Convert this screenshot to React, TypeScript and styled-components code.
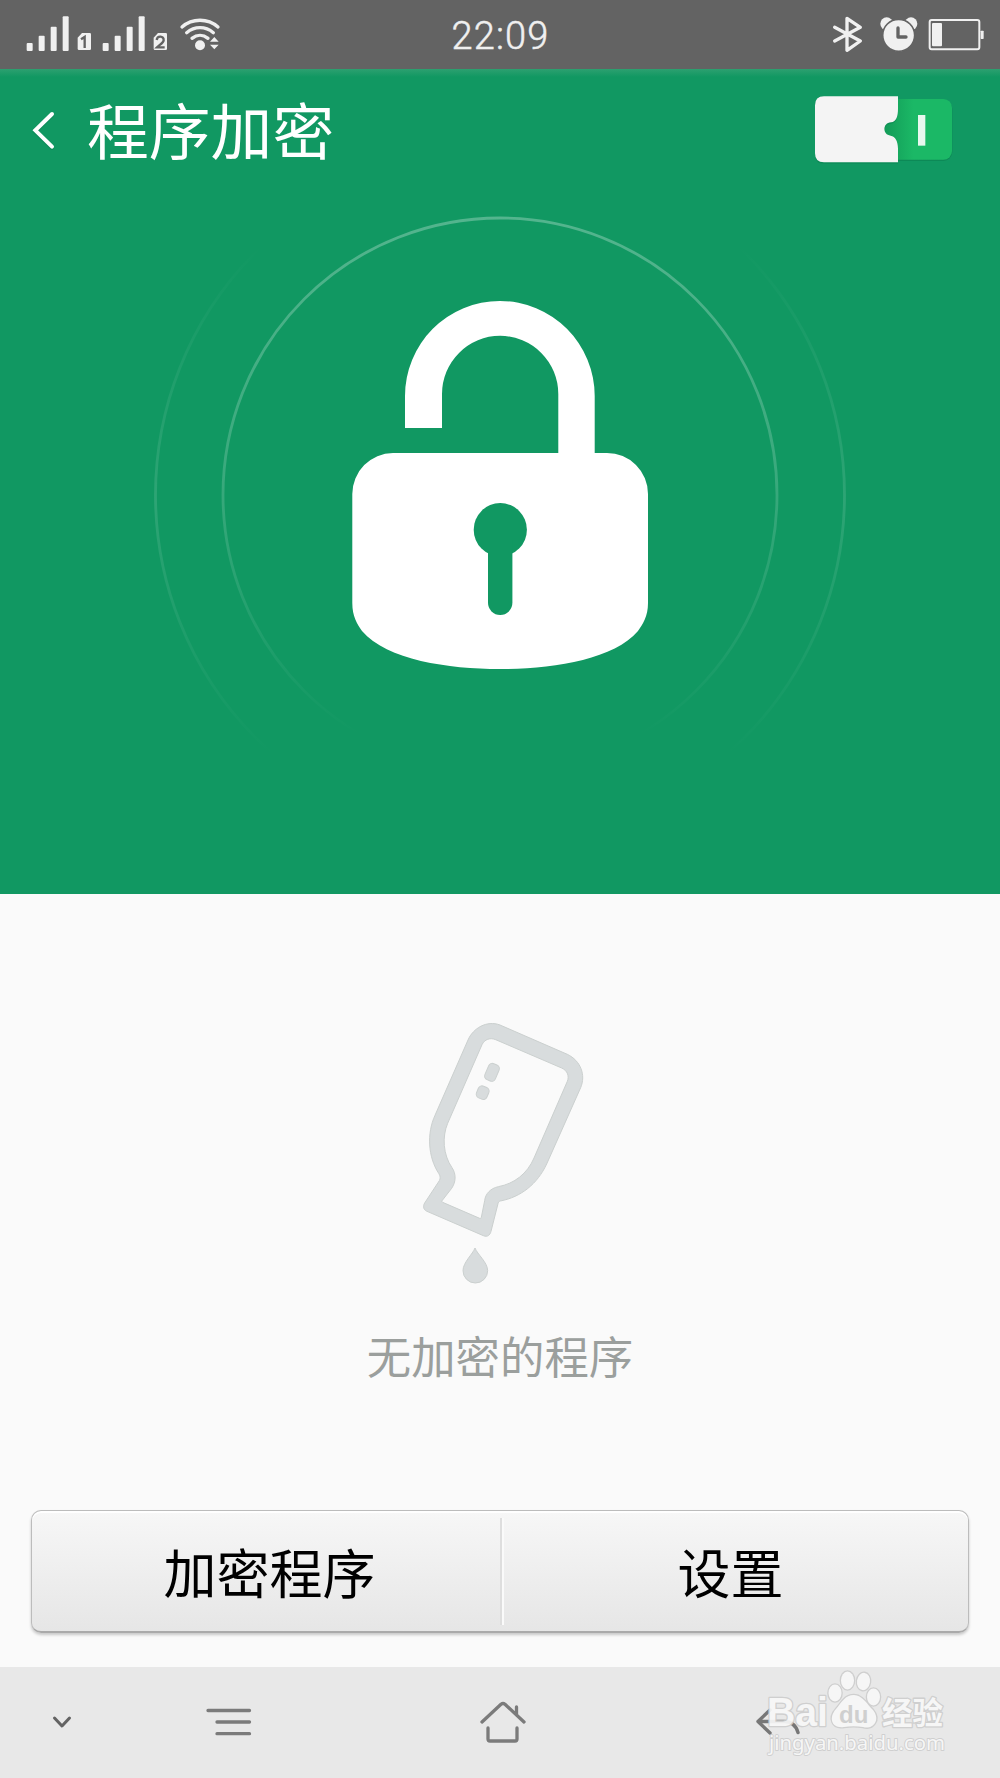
import React from "react";
import styled, { createGlobalStyle } from "styled-components";

const GlobalStyle = createGlobalStyle`
  * { box-sizing: border-box; }
  body { margin: 0; background: #fafafa; }
  svg { display: block; flex: none; }
`;

const cjk = `"Noto Sans CJK SC", "Noto Sans", sans-serif`;

const Screen = styled.div`
  width: 1000px;
  height: 1778px;
  display: flex;
  flex-direction: column;
  overflow: hidden;
  background: #fafafa;
  font-family: ${cjk};
`;

const StatusBar = styled.header`
  height: 69px;
  flex: none;
  display: grid;
  grid-template-columns: 1fr auto 1fr;
  background: #636363;
`;

const StatusGroup = styled.div<{ $end?: boolean }>`
  display: flex;
  justify-content: ${(p) => (p.$end ? "flex-end" : "flex-start")};
`;

const Clock = styled.time`
  font: 300 38px/73px Roboto, sans-serif;
  letter-spacing: 1.1px;
  margin-right: -1px;
  color: #f0f0f0;
  -webkit-text-stroke: 0.5px #f0f0f0;
`;

const Hero = styled.section`
  height: 825px;
  flex: none;
  display: flex;
  flex-direction: column;
  background: linear-gradient(#2da070 0, #119862 8px);
`;

const TitleBar = styled.div`
  height: 121px;
  flex: none;
  display: flex;
  align-items: center;
  padding: 0 48px 0 32px;
`;

const BackButton = styled.button`
  width: 55px;
  padding: 3px 0 0;
  border: 0;
  background: none;
`;

const Title = styled.h1`
  flex: 1;
  margin: 0;
  padding-bottom: 3px;
  font-size: 61.8px;
  font-weight: 400;
  line-height: 116px;
  color: #fff;
`;

const Switch = styled.button`
  width: 137px;
  height: 68px;
  padding: 0;
  border: 0;
  background: none;
`;

const LockArea = styled.div`
  display: flex;
  justify-content: center;
`;

const Empty = styled.main`
  flex: 1;
  display: flex;
  flex-direction: column;
  align-items: center;
  padding-top: 106px;
`;

const EmptyText = styled.p`
  margin: 21px 0 0;
  font-size: 44.4px;
  line-height: 68px;
  color: #9b9f9d;
`;

const Actions = styled.div`
  flex: none;
  height: 123px;
  margin: 0 31px 34px;
  display: flex;
  align-items: center;
  border: 1px solid #bcbcbc;
  border-bottom: 2px solid #aaa;
  border-radius: 10px;
  background: linear-gradient(#f7f7f7, #e6e6e6);
  box-shadow: inset 0 2px 0 #fff, 0 2px 3px rgba(0, 0, 0, 0.2);
`;

const ActionButton = styled.button<{ $width: number; $shift: number }>`
  width: ${(p) => p.$width}px;
  flex: none;
  padding: 0;
  padding-left: ${(p) => Math.max(p.$shift, 0)}px;
  padding-right: ${(p) => Math.max(-p.$shift, 0)}px;
  border: 0;
  background: none;
  font-family: ${cjk};
  font-size: 53px;
  line-height: 100px;
  color: #000;
`;

const Divider = styled.div`
  width: 4px;
  height: 107px;
  background: linear-gradient(90deg, #dedede 0 2px, #fafafa 2px);
`;

const NavBar = styled.nav`
  position: relative;
  height: 111px;
  flex: none;
  display: grid;
  grid-template-columns: 123px 211px 338px 212px;
  background: #e8e8e8;
`;

const NavButton = styled.button`
  display: flex;
  align-items: center;
  justify-content: center;
  padding: 0 0 1px;
  border: 0;
  background: none;
`;

const Watermark = styled.div`
  position: absolute;
  left: 760px;
  top: 0;
`;

const StatusLeftIcons = () => (
  <svg width="230" height="69" viewBox="0 0 690 207" fill="#f0f0f0">
    {[0, 228].map((x) => (
      <g key={x} transform={`translate(${x} 0)`}>
        <rect x="80" y="129" width="18" height="24" rx="3" />
        <rect x="116" y="107" width="18" height="46" rx="3" />
        <rect x="152" y="80" width="18" height="73" rx="3" />
        <rect x="188" y="49" width="18" height="104" rx="3" />
        <path d="M246 99h23q4 0 4 4v43q0 4-4 4h-32q-4 0-4-4v-33z" />
      </g>
    ))}
    <g fill="none" stroke="#636363" strokeWidth="7">
      <path d="M243 118l11-7v33" />
      <path d="M470 120c2-14 22-13 21 1-1 8-12 13-20 21h23" />
    </g>
    <g fill="none" stroke="#f0f0f0" strokeWidth="10" strokeLinecap="round">
      <path d="M546 81c31-27 77-27 108 0" />
      <path d="M560 98c24-20 56-20 80 0" />
      <path d="M576 115c15-12 33-12 48 0" />
    </g>
    <circle cx="600" cy="136" r="15" />
    <path d="M630 125l13-14 13 14zM630 134h26l-13 14z" />
  </svg>
);

const StatusRightIcons = () => (
  <svg width="220" height="69" viewBox="0 0 660 207" fill="#f0f0f0">
    <path
      d="M164 82l77 41-40 28V55l40 27-77 41"
      fill="none" stroke="#f0f0f0" strokeWidth="10" strokeLinejoin="round" strokeLinecap="round"
    />
    <circle cx="320" cy="71" r="19" />
    <circle cx="393" cy="71" r="19" />
    <circle cx="356" cy="106" r="48" stroke="#636363" strokeWidth="5" />
    <path d="M354 84v27h24" fill="none" stroke="#636363" strokeWidth="10" strokeLinecap="round" strokeLinejoin="round" />
    <rect x="449" y="60" width="149" height="88" rx="6" fill="none" stroke="#f0f0f0" strokeWidth="6" />
    <rect x="456" y="69" width="30" height="70" rx="3" />
    <rect x="602" y="92" width="9" height="25" rx="2" />
  </svg>
);

const BackChevron = () => (
  <svg width="24" height="42" viewBox="0 0 72 126" overflow="visible">
    <path d="M60 12L10 61l50 49" transform="translate(0 4)" fill="none" stroke="#0b7d4f" strokeOpacity=".5" strokeWidth="12" strokeLinecap="round" />
    <path d="M60 12L10 61l50 49" fill="none" stroke="#fff" strokeWidth="12" strokeLinecap="round" />
  </svg>
);

const knobPath =
  "M132 288H354V325C354 348 349 364 333 366C307 367 307 404 332 406C346 408 354 423 354 445V486H132Q105 486 105 459V315Q105 288 132 288Z";

const SwitchArt = () => (
  <svg width="137" height="68" viewBox="105 287 411 204" overflow="visible">
    <defs>
      <linearGradient id="track" x1="310" x2="400" y1="0" y2="0" gradientUnits="userSpaceOnUse">
        <stop stopColor="#129a57" />
        <stop offset="1" stopColor="#1bb866" />
      </linearGradient>
    </defs>
    <rect x="290" y="300" width="227" height="182" rx="27" fill="#0b7f50" opacity=".6" />
    <rect x="290" y="296" width="226" height="182" rx="26" fill="url(#track)" />
    <rect x="414" y="344" width="22" height="92" fill="#e8f8ef" />
    <path d={knobPath} fill="#0b7f50" opacity=".5" transform="translate(0 4)" />
    <path d={knobPath} fill="#f4f4f4" />
  </svg>
);

const LockArt = () => (
  <svg width="740" height="570" viewBox="130 190 740 570">
    <defs>
      <linearGradient id="inner" x1="0" x2="0" y1="218" y2="735" gradientUnits="userSpaceOnUse">
        <stop stopColor="#fff" stopOpacity=".28" />
        <stop offset=".5" stopColor="#fff" stopOpacity=".17" />
        <stop offset="1" stopColor="#fff" stopOpacity="0" />
      </linearGradient>
      <linearGradient id="outer" x1="0" x2="0" y1="245" y2="755" gradientUnits="userSpaceOnUse">
        <stop stopColor="#fff" stopOpacity="0" />
        <stop offset=".5" stopColor="#fff" stopOpacity=".12" />
        <stop offset="1" stopColor="#fff" stopOpacity="0" />
      </linearGradient>
    </defs>
    <circle cx="500" cy="495" r="277" fill="none" stroke="url(#inner)" strokeWidth="2.8" />
    <circle cx="500" cy="495" r="344.5" fill="none" stroke="url(#outer)" strokeWidth="2.8" />
    <path
      fill="#fff"
      d="M405 428V396A94.8 95 0 0 1 594.7 396V453H607A41 41 0 0 1 648 494V603C648 616 643 624 638 631C613 660 552 669 500 669C448 669 387 660 362 631C357 624 352.3 616 352.3 603V494A41 41 0 0 1 393 453H558.3V394A58.1 58.1 0 0 0 442 394V428Z"
    />
    <circle cx="500.3" cy="529.7" r="26.6" fill="#119862" />
    <path d="M488 540h24.4v62.8a12.2 12.2 0 0 1-24.4 0z" fill="#119862" />
  </svg>
);

const BottleArt = () => (
  <svg width="200" height="300" viewBox="0 0 600 900">
    <g fill="#d8dcdd" stroke="#cbd0cf" strokeWidth="3" fillRule="evenodd">
      <path d="M204 120C219 85 260 60 300 75L502 163C542 182 558 225 542 263L440 492C412 552 363 591 301 603C297 604 295 607 294 611L273 694C270 706 262 712 250 707L81 634C70 629 68 619 74 609L118 542C122 536 121 527 116 520C84 471 80 400 105 346Z M246 134C254 118 270 112 287 119L485 204C503 212 508 229 502 244L402 474C382 521 343 551 295 560C272 565 256 581 254 602L244 652Q243 657 239 655L128 607Q124 605 127 601L155 565C168 546 169 522 156 503C129 464 126 410 143 370Z" />
      <rect x="-17" y="-26" width="34" height="52" rx="12" transform="translate(276 217) rotate(23)" />
      <rect x="-17" y="-19" width="34" height="38" rx="12" transform="translate(248 278) rotate(23)" />
      <path d="M225 744C232 763 263 787 263 812A37 37 0 0 1 189 812C189 787 218 763 225 744Z" />
    </g>
  </svg>
);

const ChevronDownIcon = () => (
  <svg width="22" height="16" viewBox="0 0 22 16">
    <path d="M3.5 4l7.500 8 7.500-8" fill="none" stroke="#636363" strokeWidth="3" strokeLinecap="round" strokeLinejoin="round" />
  </svg>
);

const MenuIcon = () => (
  <svg width="46" height="30" viewBox="0 0 46 30">
    <path d="M2 3.500h41.500M11 15h32.500M11 26.700h32.500" stroke="#7b7b7b" strokeWidth="3.300" strokeLinecap="round" />
  </svg>
);

const HomeIcon = () => (
  <svg width="46" height="42" viewBox="0 0 46 42">
    <g fill="none" stroke="#7b7b7b" strokeWidth="3.300" strokeLinecap="round" strokeLinejoin="round">
      <path d="M2 21L21 3.300q2-1.600 4 0L44 21M36.500 6v8" />
      <path d="M8 27v11q0 2 2 2h25q2 0 2-2V27" />
    </g>
  </svg>
);

const ReturnIcon = () => (
  <svg width="46" height="30" viewBox="0 0 46 30">
    <path d="M15 3L3 14.500 15 26M3 14.500h26c8 0 12 4 14 11" fill="none" stroke="#777" strokeWidth="3.400" strokeLinecap="round" strokeLinejoin="round" />
  </svg>
);

const WatermarkArt = () => (
  <svg width="200" height="111" viewBox="760 1667 200 111">
    <g fill="#f8f8f8" stroke="#cdcdcd" strokeWidth="2.6" strokeLinejoin="round" paintOrder="stroke" opacity=".92">
      <text x="767" y="1726" fontFamily="Liberation Sans" fontWeight="700" fontSize="40" textLength="61" lengthAdjust="spacingAndGlyphs">Bai</text>
      <ellipse cx="835" cy="1693" rx="6.5" ry="8.5" />
      <ellipse cx="847.5" cy="1680.5" rx="6.5" ry="9" />
      <ellipse cx="863.5" cy="1681.5" rx="6.5" ry="8.7" transform="rotate(8 863.5 1681.5)" />
      <ellipse cx="873.5" cy="1697" rx="6.5" ry="8.5" />
      <path d="M854 1695C862 1695 867 1704 873 1710C881 1720 873 1730 863 1727C857 1726 850 1726 844 1727C832 1729 828 1718 836 1709C842 1702 845 1695 854 1695Z" />
      <text x="882" y="1723.5" fontFamily="Noto Sans CJK SC" fontWeight="700" fontSize="31" textLength="61" lengthAdjust="spacingAndGlyphs">经验</text>
      <text x="769" y="1750" fontFamily="Noto Sans" fontSize="20" strokeWidth="1.8" textLength="176" lengthAdjust="spacingAndGlyphs">jingyan.baidu.com</text>
    </g>
    <text x="839" y="1722.5" fontFamily="Liberation Sans" fontWeight="700" fontSize="24" fill="#cfcfcf">du</text>
  </svg>
);

export default function App() {
  return (
    <Screen>
      <GlobalStyle />
      <StatusBar>
        <StatusGroup><StatusLeftIcons /></StatusGroup>
        <Clock>22:09</Clock>
        <StatusGroup $end><StatusRightIcons /></StatusGroup>
      </StatusBar>
      <Hero>
        <TitleBar>
          <BackButton aria-label="返回"><BackChevron /></BackButton>
          <Title>程序加密</Title>
          <Switch role="switch" aria-checked="true"><SwitchArt /></Switch>
        </TitleBar>
        <LockArea><LockArt /></LockArea>
      </Hero>
      <Empty>
        <BottleArt />
        <EmptyText>无加密的程序</EmptyText>
      </Empty>
      <Actions>
        <ActionButton $width={468} $shift={7}>加密程序</ActionButton>
        <Divider />
        <ActionButton $width={464} $shift={-11}>设置</ActionButton>
      </Actions>
      <NavBar>
        <NavButton><ChevronDownIcon /></NavButton>
        <NavButton><MenuIcon /></NavButton>
        <NavButton><HomeIcon /></NavButton>
        <NavButton><ReturnIcon /></NavButton>
        <Watermark><WatermarkArt /></Watermark>
      </NavBar>
    </Screen>
  );
}
